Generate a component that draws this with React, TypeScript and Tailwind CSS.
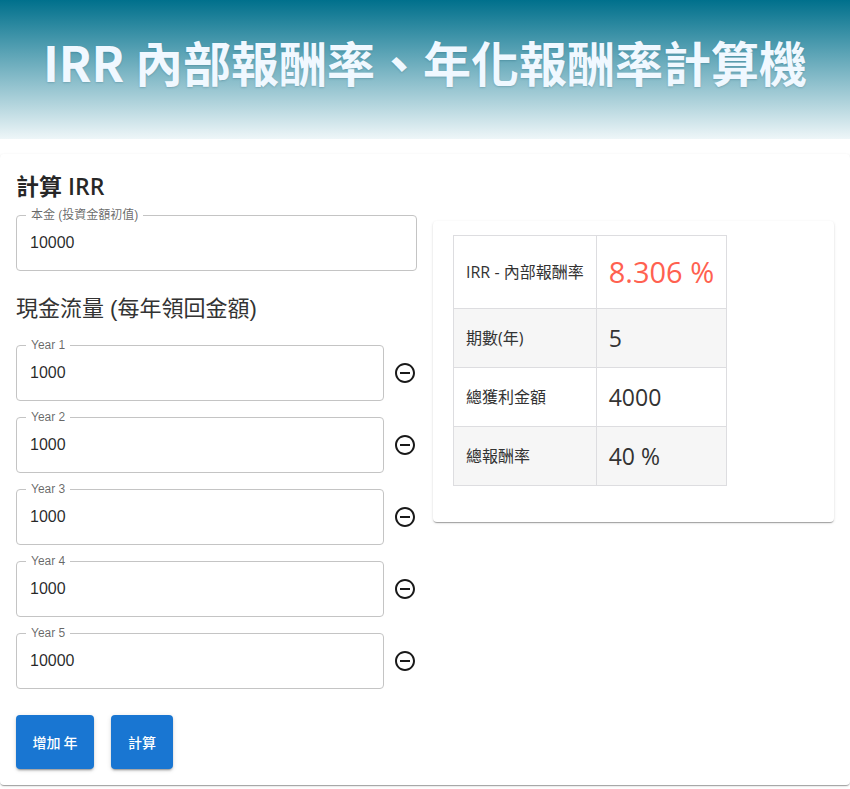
import { useState } from "react";

const cjk = "font-['Liberation_Sans','Noto_Sans_CJK_TC',sans-serif]";

function MinusCircle() {
  return (
    <svg viewBox="0 0 24 24" className="w-6 h-6 fill-black/90 shrink-0">
      <path d="M7 11v2h10v-2H7zm5-9C6.48 2 2 6.48 2 12s4.48 10 10 10 10-4.48 10-10S17.52 2 12 2zm0 18c-4.41 0-8-3.59-8-8s3.59-8 8-8 8 3.59 8 8-3.59 8-8 8z" />
    </svg>
  );
}

function Field({ label, value }: { label: string; value: string }) {
  return (
    <div className="relative h-14 flex-1 rounded border border-[#c4c4c4] bg-white">
      {/* notched label */}
      <span
        className={`absolute -top-[9px] left-[9px] px-[5px] bg-white text-xs leading-4 text-black/60 ${cjk}`}
      >
        {label}
      </span>
      <div className={`h-full flex items-center pl-[13px] text-base text-black/85 ${cjk}`}>
        {value}
      </div>
    </div>
  );
}

const rows = [
  { k: "IRR - 內部報酬率", v: "8.306 %", hi: true },
  { k: "期數(年)", v: "5" },
  { k: "總獲利金額", v: "4000" },
  { k: "總報酬率", v: "40 %" },
];

const btn =
  "h-[54px] rounded bg-[#1976d2] text-white text-sm font-medium shadow-[0_3px_1px_-2px_rgba(0,0,0,0.2),0_2px_2px_0_rgba(0,0,0,0.14),0_1px_5px_0_rgba(0,0,0,0.12)] font-['Noto_Sans_CJK_TC',sans-serif]";

export default function App() {
  const [years] = useState(["1000", "1000", "1000", "1000", "10000"]);

  return (
    <div className="min-h-screen bg-white">
      {/* Header */}
      <header className="h-[139px] flex items-center justify-center bg-[linear-gradient(to_bottom,#00708c,#eef6f8)]">
        <h1 className="text-[48px] leading-none font-bold text-[#f0f8ff] font-['Noto_Sans_CJK_TC',sans-serif] [text-shadow:0_1px_2px_rgba(0,60,80,0.2)] -mt-[18px]">
          IRR 內部報酬率、年化報酬率計算機
        </h1>
      </header>

      <main className="mt-[15px] rounded bg-white p-4 shadow-[0_2px_1px_-1px_rgba(0,0,0,0.2),0_1px_1px_0_rgba(0,0,0,0.14),0_1px_3px_0_rgba(0,0,0,0.12)]">
        <div className="grid grid-cols-2 gap-4">
          {/* Left column */}
          <div>
            <h2 className="text-[23px] leading-8 font-semibold text-black/85 font-['Open_Sans','Noto_Sans_CJK_TC',sans-serif]">
              計算 IRR
            </h2>
            <div className="mt-[13px] flex">
              <Field label="本金 (投資金額初值)" value="10000" />
            </div>

            <h3 className="mt-[22px] text-[22px] leading-8 text-[#333] font-['Liberation_Sans','Noto_Sans_CJK_TC',sans-serif]">
              現金流量 (每年領回金額)
            </h3>

            <div className="mt-5 flex flex-col gap-4">
              {years.map((y, i) => (
                <div key={i} className="flex items-center gap-[9px]">
                  <Field label={`Year ${i + 1}`} value={y} />
                  <MinusCircle />
                </div>
              ))}
            </div>

            <div className="mt-[26px] flex gap-[17px]">
              <button className={`${btn} px-4 w-[78px]`}>增加 年</button>
              <button className={`${btn} px-[17px]`}>計算</button>
            </div>
          </div>

          {/* Right column */}
          <div className="pt-[51px]">
            <div className="rounded bg-white pt-[14px] pb-9 px-5 shadow-[0_2px_1px_-1px_rgba(0,0,0,0.2),0_1px_1px_0_rgba(0,0,0,0.14),0_1px_3px_0_rgba(0,0,0,0.12)]">
              <table className="border-collapse font-['Open_Sans','Noto_Sans_CJK_TC',sans-serif] text-[#333]">
                <tbody>
                  {rows.map((r, i) => (
                    <tr key={r.k} className={`${i === 0 ? "h-[73px]" : "h-[59px]"} ${i % 2 === 1 ? "bg-[#f6f6f6]" : "bg-white"}`}>
                      <td className="border border-[#dddde0] px-3 text-base">{r.k}</td>
                      <td
                        className={`border border-[#dddde0] px-3 ${r.hi ? "text-[29px] text-[#ff6150]" : "text-[23px]"}`}
                      >
                        {r.v}
                      </td>
                    </tr>
                  ))}
                </tbody>
              </table>
            </div>
          </div>
        </div>
      </main>
    </div>
  );
}
